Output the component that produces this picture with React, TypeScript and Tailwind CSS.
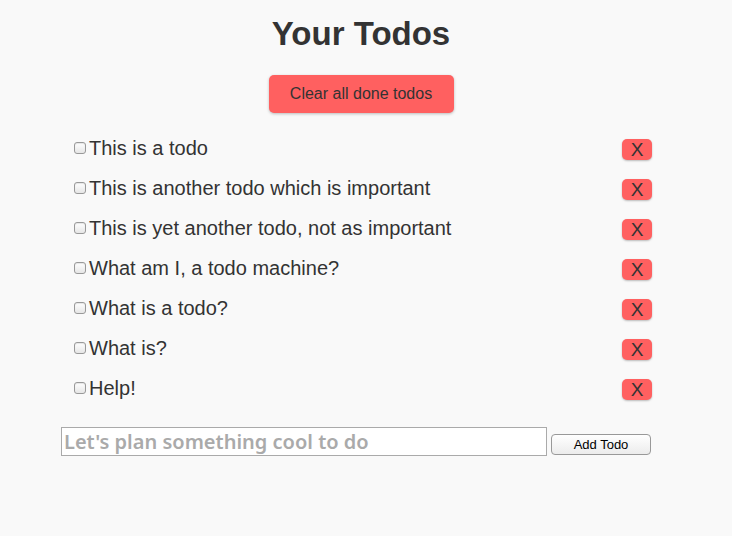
import { useState } from "react";

const initialTodos = [
  "This is a todo",
  "This is another todo which is important",
  "This is yet another todo, not as important",
  "What am I, a todo machine?",
  "What is a todo?",
  "What is?",
  "Help!",
];

const App = () => {
  const [todos, setTodos] = useState(initialTodos.map((text) => ({ text, done: false })));
  const [draft, setDraft] = useState("");

  const toggle = (i: number) =>
    setTodos((t) => t.map((todo, j) => (j === i ? { ...todo, done: !todo.done } : todo)));

  const remove = (i: number) => setTodos((t) => t.filter((_, j) => j !== i));

  const add = () => {
    if (!draft.trim()) return;
    setTodos((t) => [...t, { text: draft, done: false }]);
    setDraft("");
  };

  return (
    <div className="min-h-[536px] w-full bg-[#f9f9f9] text-[#333] font-['Liberation_Sans',Arial,sans-serif]">
      <div className="pr-[10px] pt-[15px] text-center">
        <h1 className="text-[33px] font-bold leading-[38px]">Your Todos</h1>
        <button
          onClick={() => setTodos((t) => t.filter((todo) => !todo.done))}
          className="mt-[22px] h-[38px] w-[185px] rounded-[5px] bg-[#ff6060] text-[16px] text-[#333] shadow-[0_1px_3px_rgba(0,0,0,0.25)]"
        >
          Clear all done todos
        </button>
      </div>

      <ul className="ml-[74px] mt-[15px] w-[578px]">
        {todos.map((todo, i) => (
          <li key={i} className="flex h-[40px] items-center">
            <input
              type="checkbox"
              checked={todo.done}
              onChange={() => toggle(i)}
              className="m-0 h-[12px] w-[12px] appearance-none rounded-[3px] border border-[#999] bg-gradient-to-b from-white to-[#e6e6e6] shadow-[inset_0_1px_1px_rgba(0,0,0,0.1)] checked:bg-[#6aa0e8]"
            />
            <span className={`ml-[3px] text-[20px] leading-[24px] ${todo.done ? "line-through text-[#999]" : ""}`}>
              {todo.text}
            </span>
            <button
              onClick={() => remove(i)}
              className="ml-auto mt-[2px] h-[21px] w-[30px] rounded-[5px] bg-[#ff6060] text-[19px] leading-[21px] text-[#333] shadow-[0_1px_2px_rgba(0,0,0,0.25)]"
            >
              X
            </button>
          </li>
        ))}
      </ul>

      <div className="ml-[61px] mt-[19px] flex items-end">
        <input
          value={draft}
          onChange={(e) => setDraft(e.target.value)}
          placeholder="Let's plan something cool to do"
          className="h-[29px] w-[486px] border border-[#aaa] bg-white px-[2px] font-['Noto_Sans',sans-serif] text-[20px] font-semibold text-[#333] outline-none placeholder:text-[#aaa]"
        />
        <button
          onClick={add}
          className="mb-[1px] ml-[4px] h-[21px] w-[100px] rounded-[4px] border border-[#999] bg-gradient-to-b from-white to-[#ececec] text-[13px] leading-[19px] text-black"
        >
          Add Todo
        </button>
      </div>
    </div>
  );
};

export default App;
